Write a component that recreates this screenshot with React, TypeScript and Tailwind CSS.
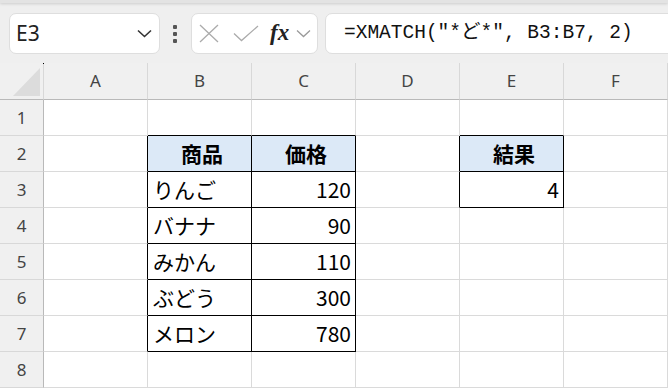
import React from 'react'

const cols = ['A', 'B', 'C', 'D', 'E', 'F']

type Cell = { text?: string; bold?: boolean; head?: boolean; right?: boolean }

const data: Record<string, Cell> = {
  B2: { text: '商品', bold: true, head: true },
  C2: { text: '価格', bold: true, head: true },
  B3: { text: 'りんご' },
  C3: { text: '120', right: true },
  B4: { text: 'バナナ' },
  C4: { text: '90', right: true },
  B5: { text: 'みかん' },
  C5: { text: '110', right: true },
  B6: { text: 'ぶどう' },
  C6: { text: '300', right: true },
  B7: { text: 'メロン' },
  C7: { text: '780', right: true },
  E2: { text: '結果', bold: true, head: true },
  E3: { text: '4', right: true },
}

// cells whose right / bottom edge is a black table border
const blackRight = new Set(['A2', 'A3', 'A4', 'A5', 'A6', 'A7', 'B2', 'B3', 'B4', 'B5', 'B6', 'B7', 'C2', 'C3', 'C4', 'C5', 'C6', 'C7', 'D2', 'D3', 'E2', 'E3'])
const blackBottom = new Set(['B1', 'C1', 'B2', 'B3', 'B4', 'B5', 'B6', 'B7', 'C2', 'C3', 'C4', 'C5', 'C6', 'C7', 'E1', 'E2', 'E3'])

const uiFont = { fontFamily: '"Noto Sans", "Open Sans", sans-serif' }
const cellFont = { fontFamily: '"Noto Sans CJK JP", "Noto Sans", sans-serif' }

function FormulaBar() {
  return (
    <div className="h-[63px] bg-[#efefef] overflow-hidden">
      <div className="h-[3px] bg-[#e3e3e3] shadow-[0_1px_3px_rgba(0,0,0,0.15)]" />
      <div className="flex items-center pt-[10px]">
        <div className="ml-[9px] w-[151px] shrink-0 h-[41px] bg-white border border-[#dedede] rounded-[7px] flex items-center pl-[6px] pr-[7px]">
          <span className="flex-1 text-[21px] text-[#222] leading-none" style={uiFont}>E3</span>
          <svg width="15" height="9" viewBox="0 0 15 9">
            <path d="M1 1.5 L7.5 7.5 L14 1.5" fill="none" stroke="#333" strokeWidth="1.6" />
          </svg>
        </div>
        <div className="ml-[13px] w-[4px] shrink-0 flex flex-col gap-[3px]">
          <div className="w-[4px] h-[4px] rounded-[1px] bg-[#555]" />
          <div className="w-[4px] h-[4px] rounded-[1px] bg-[#555]" />
          <div className="w-[4px] h-[4px] rounded-[1px] bg-[#555]" />
        </div>
        <div className="ml-[14px] w-[127px] shrink-0 h-[41px] bg-white border border-[#dedede] rounded-[7px] flex items-center pl-[7px]">
          <svg width="20" height="19" viewBox="0 0 20 19">
            <path d="M1 1 L19 18 M19 1 L1 18" fill="none" stroke="#ababab" strokeWidth="1.3" />
          </svg>
          <svg className="ml-[14px]" width="26" height="17" viewBox="0 0 26 17">
            <path d="M1 8.5 L8.5 15.5 L25 1" fill="none" stroke="#ababab" strokeWidth="1.3" />
          </svg>
          <span className="ml-[11px] text-[23px] italic font-bold text-[#222] leading-none -mt-[2px]" style={{ fontFamily: '"Liberation Serif", serif' }}>fx</span>
          <svg className="ml-[7px]" width="15" height="9" viewBox="0 0 15 9">
            <path d="M1 1.5 L7.5 7.5 L14 1.5" fill="none" stroke="#9a9a9a" strokeWidth="1.3" />
          </svg>
        </div>
        <div className="ml-[7px] w-[380px] shrink-0 h-[41px] bg-white border border-[#dedede] rounded-l-[7px] flex items-center pl-[18px]">
          <span className="text-[19.5px] text-[#111] leading-none whitespace-pre" style={{ fontFamily: '"Liberation Mono", "Noto Sans CJK JP", monospace' }}>
            =XMATCH("*ど*", B3:B7, 2)
          </span>
        </div>
      </div>
    </div>
  )
}

function Sheet() {
  const rows = [1, 2, 3, 4, 5, 6, 7, 8]
  return (
    <div className="grid grid-cols-[44px_repeat(6,104px)] grid-rows-[37px_repeat(8,36px)]">
      <div className="relative bg-[#f0f0f0] border-r border-r-[#d8d8d8] border-b border-b-[#b9b9b9]">
        <div className="absolute right-[-1px] top-0 w-[1px] h-[1px] bg-black" />
        <svg className="absolute left-[13px] top-[5px]" width="28" height="28" viewBox="0 0 28 28">
          <path d="M27 0 L27 28 L0 28 Z" fill="#dcdcdc" />
        </svg>
      </div>
      {cols.map((c) => (
        <div
          key={c}
          className="bg-[#f0f0f0] border-r border-r-[#d8d8d8] border-b border-b-[#b9b9b9] flex items-center justify-center text-[17px] text-[#444]"
          style={uiFont}
        >
          {c}
        </div>
      ))}
      {rows.map((r) => (
        <React.Fragment key={r}>
          <div
            className="bg-[#f0f0f0] border-r border-r-[#b9b9b9] border-b border-b-[#d8d8d8] flex items-center justify-center text-[17px] text-[#444]"
            style={uiFont}
          >
            {r}
          </div>
          {cols.map((c) => {
            const id = `${c}${r}`
            const cell = data[id]
            return (
              <div
                key={id}
                className={[
                  'border-r border-b flex items-center text-[21px] text-black leading-none',
                  blackRight.has(id) ? 'border-r-black' : 'border-r-[#dadada]',
                  blackBottom.has(id) ? 'border-b-black' : 'border-b-[#dadada]',
                  cell?.head ? 'bg-[#dce9f7] justify-center font-bold' : 'bg-white',
                  cell?.right ? 'justify-end pr-[4px]' : 'pl-[5px]',
                ].join(' ')}
                style={cellFont}
              >
                {cell?.text}
              </div>
            )
          })}
        </React.Fragment>
      ))}
    </div>
  )
}

export default function App() {
  return (
    <div className="w-[668px] h-[388px] overflow-hidden bg-white">
      <FormulaBar />
      <Sheet />
    </div>
  )
}
